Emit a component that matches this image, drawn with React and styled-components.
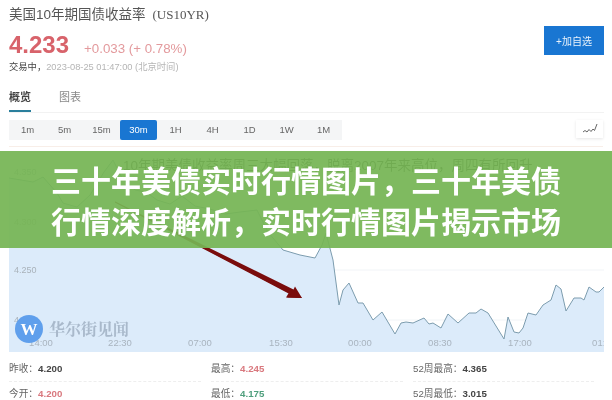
import React from 'react';
import styled, { createGlobalStyle } from 'styled-components';

const GlobalStyle = createGlobalStyle`
	html, body {
		margin: 0;
		background: #fff;
	}
	body {
		font-family: "Liberation Sans", "Noto Sans CJK SC", sans-serif;
	}
`;

const Page = styled.div`
	height: 400px;
	overflow: hidden;
	position: relative;
	width: 612px;
`;

const Quote = styled.div`
	filter: blur(0.45px);
	padding: 0 8px 0 9px;
`;

const Header = styled.header`
	align-items: flex-start;
	display: flex;
	height: 89px;
	justify-content: space-between;
`;

const Title = styled.h1`
	color: #555;
	font-size: 13.5px;
	font-weight: 400;
	line-height: 18px;
	margin: 6px 0 0;

	span {
		font-family: "Liberation Serif", serif;
		font-size: 13px;
		margin-left: 7px;
	}
`;

const PriceRow = styled.div`
	align-items: baseline;
	display: flex;
	gap: 15px;
	margin-top: 8px;
`;

const Price = styled.div`
	color: #d8636b;
	font-size: 24px;
	font-weight: 700;
	line-height: 26px;
`;

const Change = styled.div`
	color: #e39a9d;
	font-size: 13.3px;
`;

const Meta = styled.div`
	color: #b5b5b5;
	font-size: 9.3px;
	line-height: 14px;
	margin-top: 2px;

	b {
		color: #444;
		font-weight: 400;
	}
`;

const AddButton = styled.button`
	background: #1976d2;
	border: 0;
	color: #e8f2fb;
	font-family: inherit;
	font-size: 10px;
	height: 29px;
	margin-top: 26px;
	padding: 0;
	width: 60px;
`;

const Tabs = styled.nav`
	border-bottom: 1px solid #f2f2f2;
	display: flex;
	gap: 28px;
	height: 23px;
`;

const Tab = styled.div`
	border-bottom: ${props => (props.$active ? '2px solid #2a7f9c' : '0')};
	color: ${props => (props.$active ? '#444' : '#888')};
	font-size: 11px;
	font-weight: ${props => (props.$active ? 700 : 400)};
	height: 21px;
	line-height: 16px;
	width: 22px;
`;

const ToolRow = styled.div`
	align-items: flex-start;
	border-bottom: 1px solid #f8eee8;
	box-sizing: border-box;
	display: flex;
	height: 34px;
	justify-content: space-between;
	margin-right: 1px;
	padding-top: 7px;
`;

const Periods = styled.div`
	background: #f4f5f6;
	display: flex;
	height: 20px;
`;

const Period = styled.div`
	background: ${props => (props.$active ? '#1976d2' : 'transparent')};
	border-radius: 2px;
	color: ${props => (props.$active ? '#fff' : '#666')};
	font-size: 9.5px;
	line-height: 20px;
	text-align: center;
	width: 37px;
`;

const ChartToggle = styled.div`
	align-items: center;
	box-shadow: 0 1px 3px rgba(0, 0, 0, 0.1);
	display: flex;
	height: 18px;
	justify-content: center;
	width: 27px;
`;

const ChartSvg = styled.svg`
	display: block;
	height: 205px;
	width: 595px;
`;

const Stats = styled.div`
	display: grid;
	grid-template-columns: 202px 202px 191px;
	margin-top: 5px;
`;

const Stat = styled.div`
	border-bottom: ${props => (props.$last ? '0' : '1px dashed #eee')};
	color: #666;
	font-size: 9.7px;
	height: 23px;
	line-height: 23px;
	margin-right: 10px;
	padding-bottom: 1px;

	b {
		color: ${props => props.$tone || '#444'};
		font-weight: 700;
	}
`;

const Banner = styled.div`
	align-items: center;
	background: rgba(117, 181, 84, 0.93);
	box-sizing: border-box;
	color: #fff;
	display: flex;
	filter: blur(0.3px);
	font-family: "Noto Sans CJK SC", sans-serif;
	font-size: 30px;
	font-weight: 700;
	height: 97px;
	justify-content: center;
	left: 0;
	line-height: 41px;
	position: absolute;
	right: 0;
	text-align: center;
	top: 151px;
`;

const BannerText = styled.div`
	width: 512px;
`;

const periods = ['1m', '5m', '15m', '30m', '1H', '4H', '1D', '1W', '1M'];

const line = [
	[9, 178], [33, 182], [43, 177], [57, 193], [63, 203], [77, 207], [90, 195], [104, 172], [113, 160],
	[122, 178], [135, 190], [146, 192], [157, 200], [170, 204], [182, 196], [195, 206], [210, 209], [225, 214],
	[240, 212], [257, 210], [268, 232], [283, 250], [300, 255], [315, 258], [322, 245], [326, 233], [333, 260],
	[339, 305], [343, 290], [349, 283], [358, 303], [363, 303], [373, 320], [382, 312], [395, 334], [401, 323],
	[406, 322], [413, 323], [424, 318], [429, 324], [433, 323], [441, 328], [448, 314], [458, 323], [469, 313],
	[476, 313], [481, 309], [488, 313], [504, 339], [508, 317], [514, 332], [519, 333], [523, 328], [528, 313],
	[536, 315], [543, 305], [551, 300], [556, 285], [561, 289], [566, 311], [574, 298], [581, 298], [584, 300],
	[589, 287], [596, 292], [599, 292], [604, 287],
];

const linePoints = line.map(p => p.join(',')).join(' ');
const areaPoints = `9,352 ${linePoints} 604,352`;

const yLabels = [['4.350', 172], ['4.300', 222], ['4.250', 270], ['4.200', 320]];
const xLabels = [['14:00', 41], ['22:30', 120], ['07:00', 200], ['15:30', 281], ['00:00', 360], ['08:30', 440], ['17:00', 520], ['01:30', 604]];

const PriceChart = () => (
	<ChartSvg viewBox="9 147 595 205">
		{yLabels.map(([, y]) => (
			<line key={y} x1="9" x2="604" y1={y} y2={y} stroke="#f1f4f7" />
		))}
		<polygon points={areaPoints} fill="#dcebfa" />
		<polyline points={linePoints} fill="none" stroke="#7c9cae" strokeWidth="1" />
		{yLabels.map(([label, y]) => (
			<text key={label} x="14" y={y + 3} fontSize="9" fill="#a9b2ba">{label}</text>
		))}
		{xLabels.map(([label, x]) => (
			<text key={label} x={x} y="346" fontSize="9.5" fill="#a9b4bf" textAnchor="middle">{label}</text>
		))}
		<text x="123" y="170" fontSize="13.5" fill="#333">10年期美债收益率周三大幅回落，脱离2007年来高位，周四有所回升</text>
		<polygon points="115,201.5 115.5,202.5 291,294 293,290 302,298 286,297.5 289,292.5" fill="#7a0c0c" />
		<polygon points="115,201.5 293.5,289.5 295,286.5 302,298 287,297.5 290.5,294.5 115,202.5" fill="#7a0c0c" />
		<circle cx="29" cy="329" r="14" fill="#5f9fec" />
		<text x="29" y="335" fontSize="17" fontWeight="700" fill="#fff" textAnchor="middle" fontFamily="Liberation Serif, serif">W</text>
		<text x="49" y="335" fontSize="16" fontWeight="700" fill="#a9b9cb" fontFamily="Noto Serif CJK SC, Noto Sans CJK SC, serif">华尔街见闻</text>
	</ChartSvg>
);

export default function App() {
	return (
		<Page>
			<GlobalStyle />
			<Quote>
				<Header>
					<div>
						<Title>美国10年期国债收益率<span>(US10YR)</span></Title>
						<PriceRow>
							<Price>4.233</Price>
							<Change>+0.033 (+ 0.78%)</Change>
						</PriceRow>
						<Meta><b>交易中，</b>2023-08-25 01:47:00 (北京时间)</Meta>
					</div>
					<AddButton>+加自选</AddButton>
				</Header>
				<Tabs>
					<Tab $active>概览</Tab>
					<Tab>图表</Tab>
				</Tabs>
				<ToolRow>
					<Periods>
						{periods.map(p => (
							<Period key={p} $active={p === '30m'}>{p}</Period>
						))}
					</Periods>
					<ChartToggle>
						<svg width="16" height="12" viewBox="0 0 16 12" fill="none" stroke="#555" strokeWidth="0.9">
							<path d="M1 9 L3 7.5 L5 9 L7 6.5 L9 8.5 L11 6 L12.5 7.5 L15 1" />
						</svg>
					</ChartToggle>
				</ToolRow>
				<PriceChart />
				<Stats>
					<Stat>昨收：<b>4.200</b></Stat>
					<Stat $tone="#d9787e">最高：<b>4.245</b></Stat>
					<Stat>52周最高：<b>4.365</b></Stat>
					<Stat $last $tone="#d9787e">今开：<b>4.200</b></Stat>
					<Stat $last $tone="#4f9f7d">最低：<b>4.175</b></Stat>
					<Stat $last>52周最低：<b>3.015</b></Stat>
				</Stats>
			</Quote>
			<Banner>
				<BannerText>三十年美债实时行情图片，三十年美债行情深度解析，实时行情图片揭示市场</BannerText>
			</Banner>
		</Page>
	);
}
